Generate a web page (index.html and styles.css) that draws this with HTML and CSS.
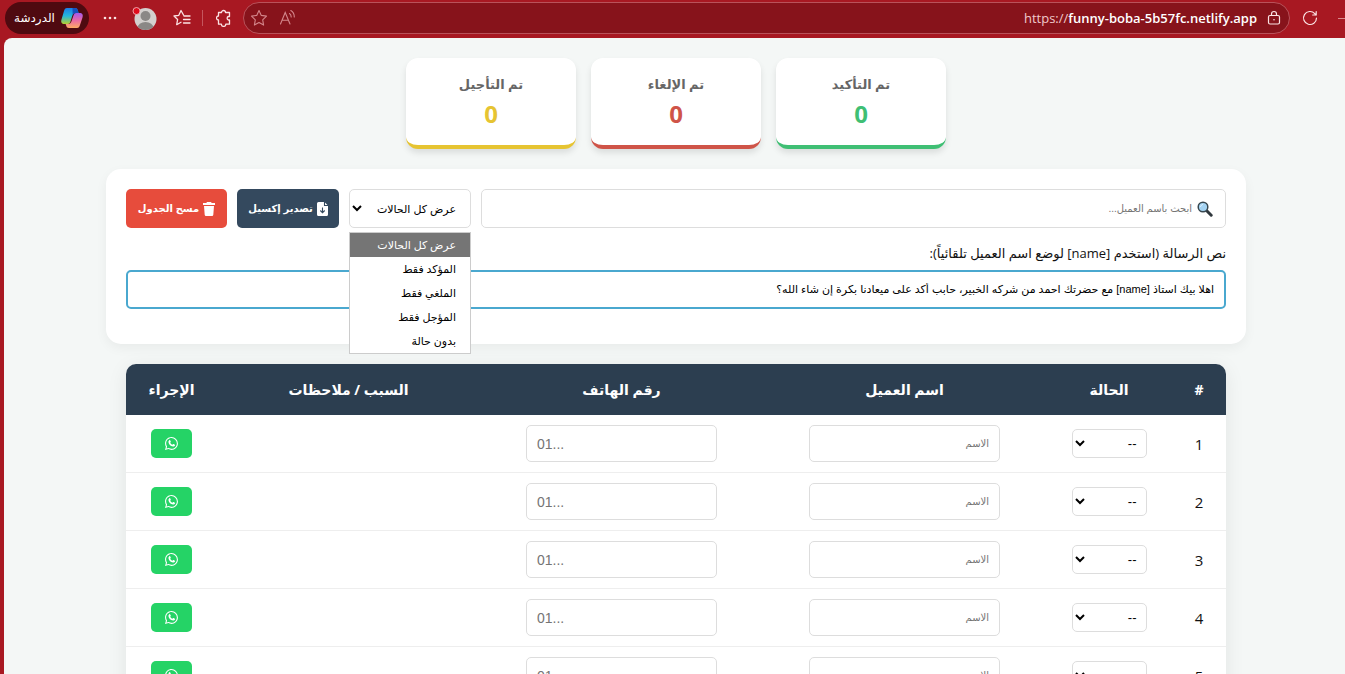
FILE: index.html
```
<!DOCTYPE html>
<html lang="ar" dir="rtl">
<head>
    <meta charset="UTF-8">
    <meta name="viewport" content="width=device-width, initial-scale=1.0">
    <title>متابعة العملاء</title>
    <link rel="stylesheet" href="styles.css">
</head>
<body>
    <svg class="sprite" aria-hidden="true">
        <symbol id="whatsapp" viewBox="0 0 16 16">
            <path d="M13.601 2.326A7.85 7.85 0 0 0 7.994 0C3.627 0 .068 3.558.064 7.926c0 1.399.366 2.76 1.057 3.965L0 16l4.204-1.102a7.9 7.9 0 0 0 3.79.965h.004c4.368 0 7.926-3.558 7.93-7.93A7.9 7.9 0 0 0 13.6 2.326zM7.994 14.521a6.6 6.6 0 0 1-3.356-.92l-.24-.144-2.494.654.666-2.433-.156-.251a6.56 6.56 0 0 1-1.007-3.505c0-3.626 2.957-6.584 6.591-6.584a6.56 6.56 0 0 1 4.66 1.931 6.56 6.56 0 0 1 1.928 4.66c-.004 3.639-2.961 6.592-6.592 6.592z"/>
            <path d="M5.3 3.9c.3-.3.8-.3 1 .1l.8 1.5c.1.3.1.5-.1.8l-.6.8c.6 1.2 1.4 1.9 2.6 2.5l.8-.8c.2-.2.5-.3.8-.1l1.5.8c.4.2.4.6.2 1-.5 1-1.4 1.5-2.5 1.3C6.6 11.3 4.5 9 4.2 6.3c-.1-.9.3-1.8 1.1-2.4z"/>
        </symbol>
    </svg>

    <header class="browser-bar">
        <span class="window-line"></span>
        <button class="bar-btn reload" aria-label="إعادة التحميل">
            <svg width="16" height="16" viewBox="0 0 16 16" fill="none" stroke="currentColor" stroke-width="1.2" stroke-linecap="round" stroke-linejoin="round">
                <path d="M14.5 8A6.5 6.5 0 1 1 12.8 3.6L14 5M14.2 1.5V5H10.7"/>
            </svg>
        </button>
        <div class="address">
            <svg width="14" height="16" viewBox="0 0 14 16" fill="none" stroke="currentColor" stroke-width="1.2">
                <rect x="1.5" y="5.5" width="11" height="8.5" rx="1.5"/>
                <path d="M4.5 5.5V4a2.5 2.5 0 0 1 5 0v1.5"/>
                <circle cx="7" cy="9.8" r=".8" fill="currentColor" stroke="none"/>
            </svg>
            <span class="url" dir="ltr">https://<b>funny-boba-5b57fc.netlify.app</b></span>
            <div class="address-tools">
                <svg width="17" height="17" viewBox="0 0 17 17" fill="none" stroke="currentColor" stroke-width="1.1" stroke-linecap="round">
                    <path d="M1.5 15 6.2 3.5 11 15M3 11.2H9.5M10.5 4.5c1.2.8 1.7 2 1.7 3.5M11.8 1.5c2.5 1.5 3.5 3.8 3.5 6.5"/>
                </svg>
                <svg width="18" height="18" viewBox="0 0 18 18" fill="none" stroke="currentColor" stroke-width="1.1" stroke-linejoin="round">
                    <path d="M9 1.5l2.3 4.9 5.2.7-3.8 3.7.9 5.3L9 13.5l-4.6 2.6.9-5.3L1.5 7.1l5.2-.7z"/>
                </svg>
            </div>
        </div>
        <button class="bar-btn extensions" aria-label="الملحقات">
            <svg width="16" height="18" viewBox="0 0 16 18" fill="none" stroke="currentColor" stroke-width="1.3" stroke-linejoin="round">
                <path d="M5.500 3.500a2 2 0 0 1 4 0H13.500V7.500h-1a1.800 1.800 0 0 0 0 3.500h1V15.200H9.800a2.200 2.200 0 0 1-4.400 0H2.500V11a2 2 0 0 1 0-4V3.500z"/>
            </svg>
        </button>
        <span class="divider"></span>
        <button class="bar-btn favorites" aria-label="المفضلة">
            <svg width="18" height="18" viewBox="0 0 18 18" fill="none" stroke="currentColor" stroke-width="1.3" stroke-linejoin="round" stroke-linecap="round">
                <path d="M10.5 6 8 1.5 5.8 6.3 1 7l3.6 3.5-.9 5.2L8 13.3M11 7h6M10.5 10.5H17M10.5 14H17"/>
            </svg>
        </button>
        <button class="bar-btn profile" aria-label="الملف الشخصي">
            <svg width="25" height="25" viewBox="0 0 25 25">
                <clipPath id="face"><circle cx="13.5" cy="13" r="11"/></clipPath>
                <circle cx="13.5" cy="13" r="11" fill="#d3d0ce"/>
                <g fill="#8a8886" clip-path="url(#face)">
                    <circle cx="13.5" cy="10" r="5"/>
                    <ellipse cx="13.5" cy="22" rx="8" ry="6"/>
                </g>
                <circle cx="4.5" cy="5" r="3.5" fill="#e00b1c" stroke="#f3c8ca" stroke-width=".8"/>
            </svg>
        </button>
        <button class="bar-btn more" aria-label="المزيد">
            <svg width="14" height="4" viewBox="0 0 14 4" fill="currentColor">
                <circle cx="2" cy="2" r="1.3"/><circle cx="7" cy="2" r="1.3"/><circle cx="12" cy="2" r="1.3"/>
            </svg>
        </button>
        <button class="copilot">
            <svg width="24" height="22" viewBox="0 0 24 22">
                <defs>
                    <linearGradient id="cool" x1="0" y1="0" x2="0" y2="1">
                        <stop offset="0" stop-color="#1b7fe8"/><stop offset=".5" stop-color="#25b7dc"/><stop offset="1" stop-color="#b7cf2e"/>
                    </linearGradient>
                    <linearGradient id="warm" x1="0" y1="0" x2="0" y2="1">
                        <stop offset="0" stop-color="#a259ee"/><stop offset=".5" stop-color="#ec6aa3"/><stop offset="1" stop-color="#ffac63"/>
                    </linearGradient>
                </defs>
                <path d="M7 1h8c2 0 2.5 1 3 3l.6 2h-2.8c-2 0-3 1-3.6 3l-1.7 5.5c-.5 1.500-1 2.500-2.500 2.500H4.500C1.500 17 .7 15 1.500 12.500L4 4c.6-2 1.200-3 3-3z" fill="url(#cool)"/>
                <path d="M17 21H9c-2 0-2.500-1-3-3l-.4-1H8c2 0 3-1 3.600-3l1.900-5.500C14 7 14.500 6 16 6h3.500c3 0 3.800 2 3 4.500L20 18c-.6 2-1.200 3-3 3z" fill="url(#warm)"/>
                <path d="M12.5 1H15c2 0 2.5 1 3 3l.6 2h-2.8c-1.5 0-2.5.8-3.1 2z" fill="#1650bd"/>
            </svg>
            <span>الدردشة</span>
        </button>
    </header>

    <main class="page">
        <div class="container">
            <section class="stats">
                <div class="stat-card confirmed">
                    <h3>تم التأكيد</h3>
                    <p>0</p>
                </div>
                <div class="stat-card cancelled">
                    <h3>تم الإلغاء</h3>
                    <p>0</p>
                </div>
                <div class="stat-card postponed">
                    <h3>تم التأجيل</h3>
                    <p>0</p>
                </div>
            </section>

            <section class="controls">
                <div class="toolbar">
                    <label class="search">
                        <svg width="16" height="16" viewBox="0 0 16 16">
                            <path d="M9.5 9.5l4.7 4.7" stroke="#30383d" stroke-width="3" stroke-linecap="round"/>
                            <circle cx="6" cy="6" r="4.8" fill="#a4d3f2" stroke="#37474f" stroke-width="1.5"/>
                            <path d="M3.5 5.5a3 3 0 0 1 2-2" stroke="#e6f5ff" fill="none" stroke-linecap="round"/>
                        </svg>
                        <input type="text" id="search" placeholder="ابحث باسم العميل..." aria-label="ابحث باسم العميل">
                    </label>
                    <div class="filter">
                        <select id="filter" aria-label="عرض كل الحالات">
                            <option>عرض كل الحالات</option>
                            <option>المؤكد فقط</option>
                            <option>الملغي فقط</option>
                            <option>المؤجل فقط</option>
                            <option>بدون حالة</option>
                        </select>
                        <ul class="filter-menu">
                            <li class="selected">عرض كل الحالات</li>
                            <li>المؤكد فقط</li>
                            <li>الملغي فقط</li>
                            <li>المؤجل فقط</li>
                            <li>بدون حالة</li>
                        </ul>
                    </div>
                    <button class="btn export">
                        <svg width="11" height="14" viewBox="0 0 11 14">
                            <path d="M1.5 0H7.5L11 3.5V12.5a1.5 1.5 0 0 1-1.5 1.5h-8A1.5 1.5 0 0 1 0 12.5v-11A1.5 1.5 0 0 1 1.5 0z" fill="#fff"/>
                            <path d="M7.5 0V3.5H11M5.5 5.5v5M3.3 8.5l2.2 2.2 2.2-2.2" fill="none" stroke="#34495e" stroke-width="1.1"/>
                        </svg>
                        <span>تصدير إكسيل</span>
                    </button>
                    <button class="btn clear">
                        <svg width="12" height="14" viewBox="0 0 12 14" fill="#fff">
                            <path d="M4 0h4l.7 1H12v2H0V1h3.3zM1 4h10l-.7 8.7A1.4 1.4 0 0 1 9 14H3a1.4 1.4 0 0 1-1.3-1.3z"/>
                        </svg>
                        <span>مسح الجدول</span>
                    </button>
                </div>
                <label class="message-label" for="message">نص الرسالة (استخدم [name] لوضع اسم العميل تلقائياً):</label>
                <input type="text" class="message" id="message" value="اهلا بيك استاذ [name] مع حضرتك احمد من شركه الخبير، حابب أكد على ميعادنا بكرة إن شاء الله؟">
            </section>

            <div class="table-wrap">
                <table>
                    <thead>
                        <tr>
                            <th class="col-num">#</th>
                            <th class="col-status">الحالة</th>
                            <th class="col-field">اسم العميل</th>
                            <th class="col-field">رقم الهاتف</th>
                            <th>السبب / ملاحظات</th>
                            <th class="col-action">الإجراء</th>
                        </tr>
                    </thead>
                    <tbody>
                        <tr>
                            <td>1</td>
                            <td><select class="status" aria-label="الحالة"><option>--</option></select></td>
                            <td><input type="text" class="field" placeholder="الاسم" aria-label="الاسم"></td>
                            <td><input type="tel" class="field phone" dir="ltr" placeholder="01..." aria-label="رقم الهاتف"></td>
                            <td></td>
                            <td><button class="wa-btn" aria-label="واتساب"><svg width="13" height="13"><use href="#whatsapp"/></svg></button></td>
                        </tr>
                        <tr>
                            <td>2</td>
                            <td><select class="status" aria-label="الحالة"><option>--</option></select></td>
                            <td><input type="text" class="field" placeholder="الاسم" aria-label="الاسم"></td>
                            <td><input type="tel" class="field phone" dir="ltr" placeholder="01..." aria-label="رقم الهاتف"></td>
                            <td></td>
                            <td><button class="wa-btn" aria-label="واتساب"><svg width="13" height="13"><use href="#whatsapp"/></svg></button></td>
                        </tr>
                        <tr>
                            <td>3</td>
                            <td><select class="status" aria-label="الحالة"><option>--</option></select></td>
                            <td><input type="text" class="field" placeholder="الاسم" aria-label="الاسم"></td>
                            <td><input type="tel" class="field phone" dir="ltr" placeholder="01..." aria-label="رقم الهاتف"></td>
                            <td></td>
                            <td><button class="wa-btn" aria-label="واتساب"><svg width="13" height="13"><use href="#whatsapp"/></svg></button></td>
                        </tr>
                        <tr>
                            <td>4</td>
                            <td><select class="status" aria-label="الحالة"><option>--</option></select></td>
                            <td><input type="text" class="field" placeholder="الاسم" aria-label="الاسم"></td>
                            <td><input type="tel" class="field phone" dir="ltr" placeholder="01..." aria-label="رقم الهاتف"></td>
                            <td></td>
                            <td><button class="wa-btn" aria-label="واتساب"><svg width="13" height="13"><use href="#whatsapp"/></svg></button></td>
                        </tr>
                        <tr>
                            <td>5</td>
                            <td><select class="status" aria-label="الحالة"><option>--</option></select></td>
                            <td><input type="text" class="field" placeholder="الاسم" aria-label="الاسم"></td>
                            <td><input type="tel" class="field phone" dir="ltr" placeholder="01..." aria-label="رقم الهاتف"></td>
                            <td></td>
                            <td><button class="wa-btn" aria-label="واتساب"><svg width="13" height="13"><use href="#whatsapp"/></svg></button></td>
                        </tr>
                    </tbody>
                </table>
            </div>
        </div>
    </main>
</body>
</html>
```

FILE: styles.css
```
* {
    box-sizing: border-box;
}
body {
    margin: 0;
    height: 100vh;
    display: flex;
    flex-direction: column;
    overflow: hidden;
    background-color: #a81822;
    color: #111;
    font-family: "Open Sans", "DejaVu Sans", sans-serif;
    font-size: 15px;
}
button, input, select {
    font-family: "Liberation Sans", "DejaVu Sans", sans-serif;
    margin: 0;
}
button {
    border: none;
    cursor: pointer;
}
svg {
    display: block;
    flex-shrink: 0;
}
.sprite {
    position: absolute;
    width: 0;
    height: 0;
}

/* browser bar */
.browser-bar {
    display: flex;
    align-items: center;
    flex-shrink: 0;
    height: 38px;
    padding: 0 0 2px 5px;
    color: #fbe3e4;
}
.window-line {
    width: 7px;
    height: 1px;
    background-color: #d98a8f;
}
.bar-btn {
    display: flex;
    padding: 0;
    background: none;
    color: inherit;
}
.reload {
    margin: 0 20px 0 12px;
}
.address {
    flex: 1;
    display: flex;
    align-items: center;
    height: 32px;
    padding: 0 8px 0 6px;
    border: 1px solid #b9525a;
    border-radius: 16px;
    background-color: #87131b;
}
.url {
    margin-right: 10px;
    font-size: 13px;
    color: #f0c9cb;
}
.url b {
    font-weight: 600;
    color: #fff;
}
.address-tools {
    display: flex;
    gap: 11px;
    margin-right: auto;
    color: #d3868b;
}
.extensions {
    margin: 0 11px 0 13px;
}
.divider {
    width: 1px;
    height: 16px;
    background-color: #c5565e;
}
.favorites {
    margin: 0 11px 0 16px;
}
.more {
    margin: 0 15px 0 14px;
}
.copilot {
    display: flex;
    align-items: center;
    gap: 5px;
    height: 32px;
    padding: 0 5px 0 9px;
    border-radius: 16px;
    background-color: #4f0a10;
    color: #fff;
    font-size: 12px;
}

/* page */
.page {
    flex: 1;
    min-height: 0;
    overflow: hidden;
    margin-left: 4px;
    padding: 20px 20px 20px 23px;
    border-top-left-radius: 8px;
    background-color: #f4f7f6;
}
.container {
    max-width: 1140px;
    margin: 0 auto;
}
.stats {
    display: flex;
    justify-content: center;
    gap: 15px;
    margin-bottom: 20px;
}
.stat-card {
    width: 170px;
    padding: 15px;
    border-bottom: 4px solid;
    border-radius: 12px;
    background-color: #fff;
    box-shadow: 0 4px 6px rgba(0, 0, 0, 0.1);
    text-align: center;
}
.stat-card h3 {
    margin: 0;
    color: #666;
    font-size: 13px;
    line-height: 22px;
}
.stat-card p {
    margin: 5px 0 2px;
    font-size: 24px;
    font-weight: bold;
    line-height: 28px;
}
.confirmed {
    border-color: #3fbf74;
}
.confirmed p {
    color: #3fbf74;
}
.cancelled {
    border-color: #cf5448;
}
.cancelled p {
    color: #cf5448;
}
.postponed {
    border-color: #e6c432;
}
.postponed p {
    color: #e6c432;
}

.controls {
    margin-bottom: 20px;
    padding: 20px;
    border-radius: 15px;
    background-color: #fff;
    box-shadow: 0 4px 12px rgba(0, 0, 0, 0.05);
}
.toolbar {
    display: flex;
    gap: 10px;
    height: 39px;
    margin-bottom: 15px;
}
.search {
    flex: 1;
    display: flex;
    align-items: center;
    gap: 5px;
    padding: 0 12px;
    border: 1px solid #ddd;
    border-radius: 5px;
}
.search input {
    flex: 1;
    border: none;
    outline: none;
    padding: 0;
    font-size: 10px;
}
input::placeholder {
    color: #757575;
}
.filter {
    position: relative;
    width: 122px;
}
.filter select {
    width: 100%;
    height: 100%;
    padding: 0 10px 0 0;
    border: 1px solid #ddd;
    border-radius: 5px;
    background-color: #fff;
    color: #000;
    font-size: 11px;
}
.filter-menu {
    position: absolute;
    top: 43px;
    left: 0;
    right: 0;
    z-index: 2;
    margin: 0;
    padding: 0;
    border: 1px solid #ccc;
    background-color: #fff;
    list-style: none;
    color: #000;
    font-size: 11px;
    line-height: 24px;
}
.filter-menu li {
    padding: 0 14px;
    white-space: nowrap;
}
.filter-menu .selected {
    background-color: #757575;
    color: #fff;
}
.btn {
    display: flex;
    align-items: center;
    justify-content: center;
    gap: 4px;
    padding: 0;
    border-radius: 5px;
    color: #fff;
    font-size: 10px;
    font-weight: bold;
    white-space: nowrap;
}
.export {
    width: 102px;
    background-color: #34495e;
}
.clear {
    width: 101px;
    background-color: #e74c3c;
}
.message-label {
    display: block;
    margin-bottom: 7px;
    font-size: 13px;
    line-height: 20px;
}
.message {
    display: block;
    width: 100%;
    height: 39px;
    margin-bottom: 15px;
    padding: 0 10px;
    border: 2px solid #4aa8cf;
    border-radius: 5px;
    color: #000;
    font-size: 11px;
}

/* clients table */
.table-wrap {
    margin: 0 20px;
    border-radius: 10px 10px 0 0;
    overflow: hidden;
    background-color: #fff;
    box-shadow: 0 4px 20px rgba(0, 0, 0, 0.08);
}
table {
    width: 100%;
    table-layout: fixed;
    border-collapse: separate;
    border-spacing: 0;
}
th {
    height: 51px;
    padding: 0;
    background-color: #2c3e50;
    color: #fff;
    font-size: 14px;
}
td {
    height: 58px;
    padding: 0;
    border-bottom: 1px solid #eee;
    text-align: center;
}
.col-num {
    width: 54px;
}
.col-status {
    width: 126px;
}
.col-field {
    width: 283px;
}
.col-action {
    width: 91px;
}
.field {
    width: 191px;
    height: 37px;
    padding: 0 10px;
    border: 1px solid #ddd;
    border-radius: 5px;
    font-size: 10px;
    vertical-align: middle;
}
.phone {
    font-size: 14px;
}
.status {
    width: 75px;
    height: 29px;
    padding: 0 5px 0 0;
    border: 1px solid #ddd;
    border-radius: 5px;
    background-color: #fff;
    color: #000;
    font-size: 13px;
    vertical-align: middle;
}
.wa-btn {
    display: inline-flex;
    align-items: center;
    justify-content: center;
    width: 41px;
    height: 29px;
    padding: 0;
    border-radius: 5px;
    background-color: #25d366;
    color: #fff;
    vertical-align: middle;
}
.wa-btn svg {
    fill: currentColor;
}
```
